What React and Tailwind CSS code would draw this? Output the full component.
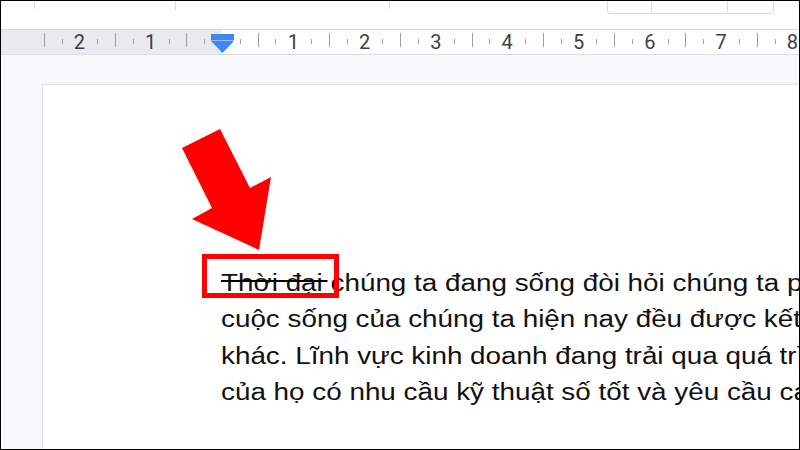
import React from "react";

const PX = 71.3;
const ZERO = 222;

function Ruler() {
  const ticks = [];
  for (let k = -10; k <= 33; k++) {
    if (k % 4 === 0) continue;
    const x = Math.round(ZERO + (k * PX) / 4) + 0.5;
    const big = k % 2 === 0;
    ticks.push(
      <line key={k} x1={x} x2={x} y1={big ? 33 : 39} y2={big ? 47 : 44} stroke="#9aa0a6" strokeWidth="1" />
    );
  }
  const nums = [];
  for (let n = -2; n <= 8; n++) {
    if (n === 0) continue;
    nums.push(
      <text key={n} x={ZERO + n * PX} y={49} textAnchor="middle" fontFamily="Roboto, sans-serif" fontSize="20" fill="#3c4043">
        {Math.abs(n)}
      </text>
    );
  }
  return (
    <svg width="798" height="24" viewBox="1 30 798 24" className="block">
      <rect x="1" y="30" width="221" height="24" fill="#e9eaed" />
      {ticks}
      {nums}
      <rect x="211" y="34" width="23" height="6.5" fill="#4285f4" />
      <polygon points="211,41 234,41 222.5,53" fill="#4285f4" />
    </svg>
  );
}

export default function App() {
  return (
    <div className="w-[800px] h-[450px] border border-black overflow-hidden flex flex-col bg-white">
      {/* top toolbar remnant */}
      <div className="h-[28px] flex items-start shrink-0">
        <div className="ml-[33px] w-px h-[8px] bg-[#dadce0]" />
        <div className="ml-[140px] w-px h-[10px] bg-[#dadce0]" />
        <div className="ml-[213px] w-px h-[8px] bg-[#dadce0]" />
        <div className="ml-[217px] w-[167px] h-[13px] border border-t-0 border-[#dadce0] rounded-b-[4px] flex">
          <div className="w-[44px] border-r border-[#dadce0]" />
          <div className="w-[76px] border-r border-[#dadce0]" />
        </div>
      </div>
      {/* ruler */}
      <div className="h-[26px] shrink-0 border-y border-[#dadce0]">
        <Ruler />
      </div>
      {/* canvas */}
      <div className="flex-1 bg-[#f8f9fa] pl-[41px] pt-[29px] overflow-hidden">
        <div className="relative w-[800px] h-[400px] bg-white border-l border-t border-[#e3e4e6] shadow-[0_0_3px_rgba(0,0,0,0.08)] pl-[178px] pt-[180px]">
          <div
            className="origin-left scale-x-[1.21] text-[23px] leading-[36.4px] text-[#111]"
            style={{ fontFamily: '"Liberation Sans", Arial, sans-serif' }}
          >
            <div className="whitespace-nowrap">
              <span className="relative">
                Thời đại{" "}
                <span className="absolute left-0 right-[3px] top-[9.5px] h-[2px] bg-black" />
              </span>
              chúng ta đang sống đòi hỏi chúng ta phải thích nghi
            </div>
            <div className="whitespace-nowrap">cuộc sống của chúng ta hiện nay đều được kết nối</div>
            <div className="whitespace-nowrap">khác. Lĩnh vực kinh doanh đang trải qua quá trình</div>
            <div className="whitespace-nowrap">của họ có nhu cầu kỹ thuật số tốt và yêu cầu cao</div>
          </div>
          {/* highlight box */}
          <div className="absolute left-[159px] top-[169px] w-[137px] h-[44px] border-[5px] border-[#ff0000]" />
          {/* arrow */}
          <svg className="absolute left-0 top-0" width="300" height="300" viewBox="43 85 300 300">
            <polygon
              points="182,148 220,129 250,188 271,177 259,250 192,219 212,208"
              fill="#ff0000"
            />
          </svg>
        </div>
      </div>
    </div>
  );
}
